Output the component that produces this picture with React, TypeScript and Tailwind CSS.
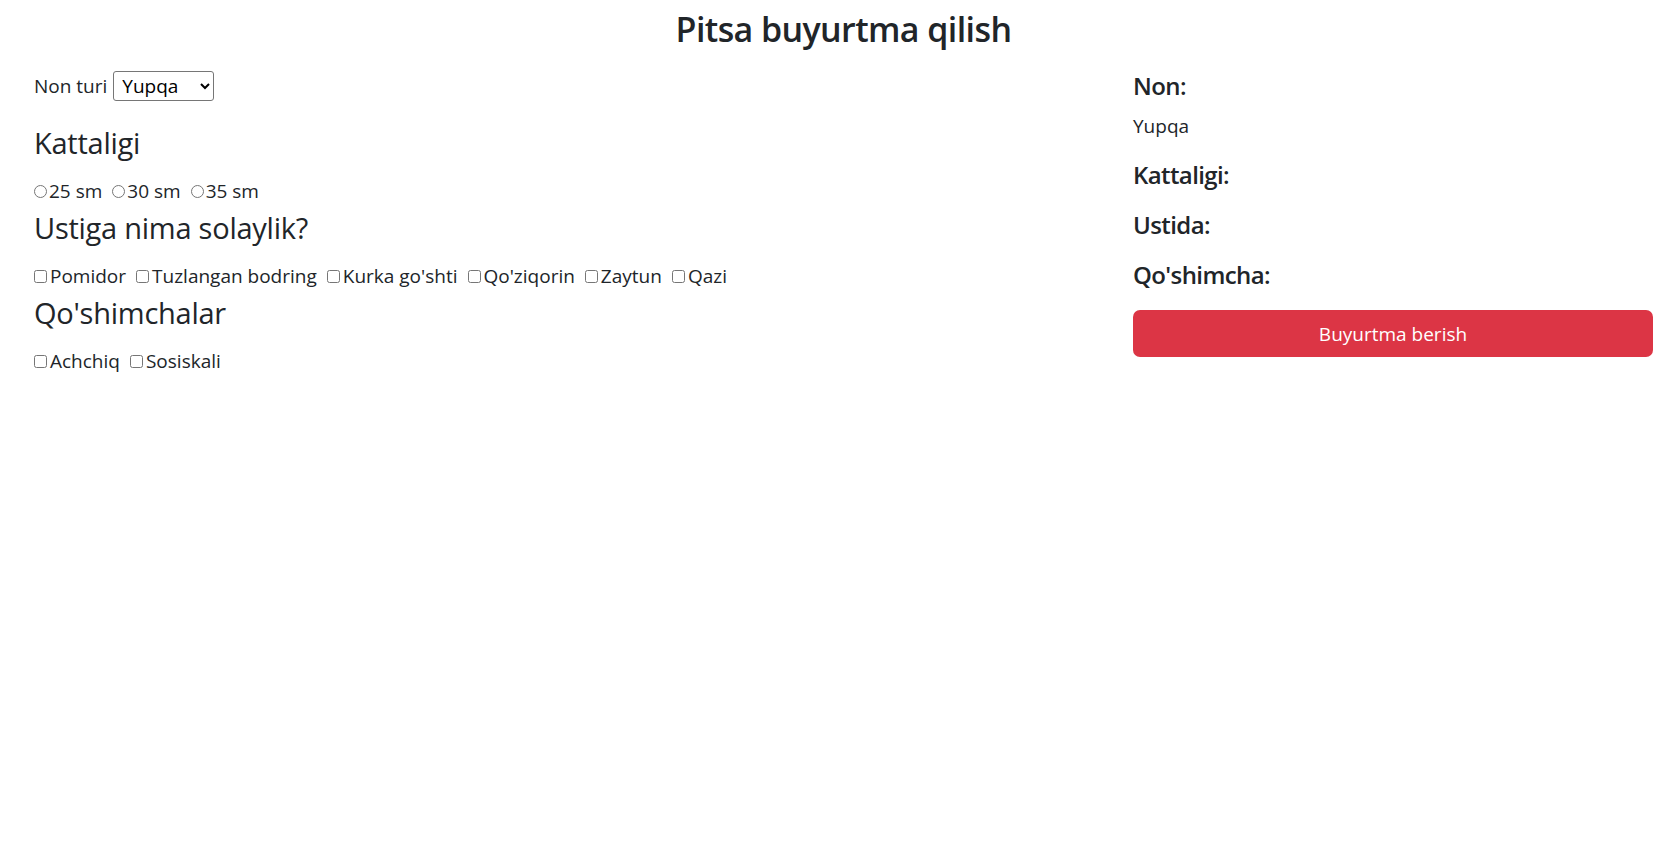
import React from "react";

const toppings = ["Pomidor", "Tuzlangan bodring", "Kurka go'shti", "Qo'ziqorin", "Zaytun", "Qazi"];
const extras = ["Achchiq", "Sosiskali"];
const sizes = ["25 sm", "30 sm", "35 sm"];

export default function App() {
  return (
    <div className="min-h-screen bg-white text-[#212529] font-['Open_Sans',sans-serif] pl-[34px] pr-[15px] pt-[8px]">
      <h3 className="text-center text-[34px] leading-[42px] font-semibold tracking-[-0.6px]">Pitsa buyurtma qilish</h3>
      <div className="flex mt-[21px]">
        <div className="flex-1">
          <div className="text-[19px] leading-[30px] h-[30px] flex items-center">
            <span>Non turi</span>
            <select
              defaultValue="Yupqa"
              className="ml-[6px] h-[30px] w-[101px] border border-[#767676] rounded-[3px] pl-[4px] text-[19px] leading-[28px] bg-white text-black"
            >
              <option>Yupqa</option>
              <option>Qalin</option>
            </select>
          </div>
          <h4 className="mt-[24px] mb-[15px] text-[29px] leading-[36px] font-normal tracking-[-0.25px]">Kattaligi</h4>
          <div className="text-[19px] leading-[30px] h-[30px]">
            {sizes.map((s) => (
              <label key={s} className="mr-[10px]">
                <input type="radio" name="size" className="mr-[2px] mb-[2px] align-baseline w-[13px] h-[13px]" />
                {s}
              </label>
            ))}
          </div>
          <h4 className="mt-[4px] mb-[15px] text-[29px] leading-[36px] font-normal tracking-[-0.25px]">Ustiga nima solaylik?</h4>
          <div className="text-[19px] leading-[30px] h-[30px]">
            {toppings.map((t) => (
              <label key={t} className="mr-[10px]">
                <input type="checkbox" className="mr-[3px] mb-[2px] align-baseline w-[13px] h-[13px]" />
                {t}
              </label>
            ))}
          </div>
          <h4 className="mt-[4px] mb-[15px] text-[29px] leading-[36px] font-normal tracking-[-0.25px]">Qo'shimchalar</h4>
          <div className="text-[19px] leading-[30px] h-[30px]">
            {extras.map((t) => (
              <label key={t} className="mr-[10px]">
                <input type="checkbox" className="mr-[3px] mb-[2px] align-baseline w-[13px] h-[13px]" />
                {t}
              </label>
            ))}
          </div>
        </div>
        <div className="w-[520px]">
          <h5 className="text-[24px] leading-[30px] font-semibold mb-[10px] tracking-[-0.6px]">Non:</h5>
          <p className="text-[19px] leading-[30px] mb-[19px]">Yupqa</p>
          <h5 className="text-[24px] leading-[30px] font-semibold mb-[20px] tracking-[-0.6px]">Kattaligi:</h5>
          <h5 className="text-[24px] leading-[30px] font-semibold mb-[20px] tracking-[-0.6px]">Ustida:</h5>
          <h5 className="text-[24px] leading-[30px] font-semibold mb-[20px] tracking-[-0.6px]">Qo'shimcha:</h5>
          <button className="w-full h-[47px] rounded-[7px] bg-[#dc3545] text-white text-[19px] leading-[30px]">
            Buyurtma berish
          </button>
        </div>
      </div>
    </div>
  );
}
